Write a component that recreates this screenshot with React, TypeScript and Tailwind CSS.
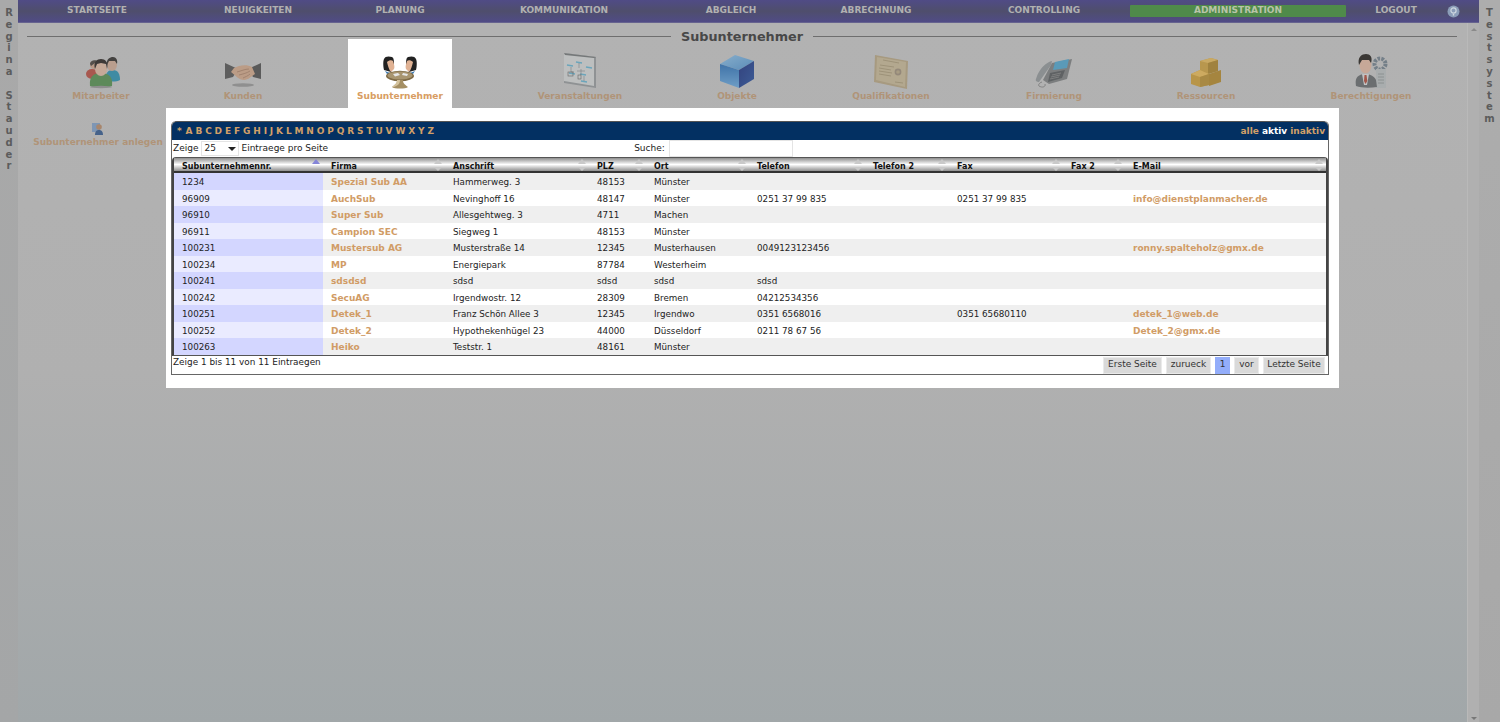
import React from "react";

const navItems: [string, string][] = [
  ["STARTSEITE", "w-[158px]"],
  ["NEUIGKEITEN", "w-[164px]"],
  ["PLANUNG", "w-[120px]"],
  ["KOMMUNIKATION", "w-[208px]"],
  ["ABGLEICH", "w-[126px]"],
  ["ABRECHNUNG", "w-[164px]"],
  ["CONTROLLING", "w-[172px]"],
];

const rows = [
  ["1234", "Spezial Sub AA", "Hammerweg. 3", "48153", "Münster", "", "", "", "", ""],
  ["96909", "AuchSub", "Nevinghoff 16", "48147", "Münster", "0251 37 99 835", "", "0251 37 99 835", "", "info@dienstplanmacher.de"],
  ["96910", "Super Sub", "Allesgehtweg. 3", "4711", "Machen", "", "", "", "", ""],
  ["96911", "Campion SEC", "Siegweg 1", "48153", "Münster", "", "", "", "", ""],
  ["100231", "Mustersub AG", "Musterstraße 14", "12345", "Musterhausen", "0049123123456", "", "", "", "ronny.spalteholz@gmx.de"],
  ["100234", "MP", "Energiepark", "87784", "Westerheim", "", "", "", "", ""],
  ["100241", "sdsdsd", "sdsd", "sdsd", "sdsd", "sdsd", "", "", "", ""],
  ["100242", "SecuAG", "Irgendwostr. 12", "28309", "Bremen", "04212534356", "", "", "", ""],
  ["100251", "Detek_1", "Franz Schön Allee 3", "12345", "Irgendwo", "0351 6568016", "", "0351 65680110", "", "detek_1@web.de"],
  ["100252", "Detek_2", "Hypothekenhügel 23", "44000", "Düsseldorf", "0211 78 67 56", "", "", "", "Detek_2@gmx.de"],
  ["100263", "Heiko", "Teststr. 1", "48161", "Münster", "", "", "", "", ""],
];

const heads = ["Subunternehmennr.", "Firma", "Anschrift", "PLZ", "Ort", "Telefon", "Telefon 2", "Fax", "Fax 2", "E-Mail"];
const letters = "ABCDEFGHIJKLMNOPQRSTUVWXYZ".split("");
const gridCols = "grid grid-cols-[149px_122px_144px_57px_103px_116px_84px_114px_62px_1fr]";

function People() {
  return (
    <svg width="40" height="40" viewBox="0 0 40 40">
      <ellipse cx="11" cy="24" rx="6" ry="5" fill="#a8584f" />
      <circle cx="13" cy="15" r="4" fill="#b89a88" />
      <path d="M9 14c0-4 7-5 8-2l-3 1-4 3z" fill="#55504c" />
      <path d="M25 30c-1-7 2-10 7-10s7 4 7 10c-4 2-10 2-14 0z" fill="#3f8ba3" />
      <ellipse cx="31" cy="15" rx="5" ry="6" fill="#b99e8e" />
      <path d="M26 15c-1-6 3-8 6-8s5 3 4 7l-2-3-6 0z" fill="#444240" />
      <path d="M9 36c-1-9 3-13 11-13s12 4 11 13c-6 2-16 2-22 0z" fill="#5d8a5a" />
      <ellipse cx="20" cy="19" rx="6" ry="7" fill="#c5a998" />
      <path d="M14 19c-2-7 2-10 6-10s8 3 6 10l-1-5-5-1-4 1z" fill="#3e3a38" />
      <ellipse cx="20" cy="37" rx="11" ry="1.2" fill="#8e8e8e" />
    </svg>
  );
}
function Handshake() {
  return (
    <svg width="40" height="40" viewBox="0 0 40 40">
      <ellipse cx="20" cy="35" rx="11" ry="1.8" fill="#8f8f8f" />
      <path d="M2 13l13 6-5 8-8 2z" fill="#5e5e5e" />
      <path d="M38 13l-13 6 5 8 8 2z" fill="#5a5a5a" />
      <path d="M11 18c5-3 13-4 18-1l3 7c-3 2-7 6-11 6-5 0-9-5-13-8z" fill="#bb9c86" />
      <path d="M14 22c4-1 8-3 12-3M16 25c4-1 8-2 11-4M20 28c2-1 5-2 7-4" stroke="#9a7c6a" strokeWidth="0.8" fill="none" />
    </svg>
  );
}
function Table() {
  return (
    <svg width="40" height="40" viewBox="0 0 40 40">
      <path d="M4 20c-1-4-1-9 0-11 1-3 5-3 8-2 2 1 2 4 2 8l-3 7z" fill="#222" />
      <path d="M7 12c2-2 5-2 6-1 1 3 2 6 1 8l-3 3c-2-2-3-6-4-10z" fill="#e0b294" />
      <path d="M36 20c1-4 1-9 0-11-1-3-5-3-8-2-2 1-2 4-2 8l3 7z" fill="#222" />
      <path d="M33 12c-2-2-5-2-6-1-1 3-2 6-1 8l3 3c2-2 3-6 4-10z" fill="#e0b294" />
      <path d="M5 21l5 2-3 1zM35 21l-5 2 3 1z" fill="#3a78b0" />
      <ellipse cx="20" cy="26" rx="14" ry="5.2" fill="#7e6a46" />
      <ellipse cx="20" cy="25.5" rx="12.5" ry="4" fill="#a89570" />
      <path d="M13 24l5-1 2 2-5 1.5zM23 23l5 1-1 2-5-1z" fill="#e6e6e6" />
      <path d="M17 30h6c0 3 1 4 5 7-2 2-14 2-16 0 4-3 5-4 5-7z" fill="#a58f63" />
      <path d="M17 30h3c0 3-1 5-6 7-1 0-2 0-2 0 4-3 5-4 5-7z" fill="#d4c29c" />
    </svg>
  );
}
function Flow() {
  return (
    <svg width="40" height="40" viewBox="0 0 40 40">
      <path d="M4 3l32 4 0 31-32-5z" fill="#8f9294" />
      <path d="M4 3l30 4 0 29-30-5z" fill="#bdbfbf" />
      <path d="M4 3l32 4-2 1-29-3z" fill="#757879" />
      <path d="M7 15l6 1M16 12l6 1M26 17l6 1M9 23l6 1M20 24l6 1M21 31l6 1" stroke="#6aa5bb" strokeWidth="1.4" />
      <path d="M19 13v5M11 17v5h3M21 19v6M17 21h8M24 26v5" stroke="#7d8285" strokeWidth="0.6" fill="none" />
      <rect x="8" y="22" width="5" height="4" fill="none" stroke="#666" strokeWidth="0.6" />
      <rect x="18" y="25" width="3" height="4" fill="none" stroke="#666" strokeWidth="0.6" />
    </svg>
  );
}
function Cube() {
  return (
    <svg width="40" height="40" viewBox="0 0 40 40">
      <defs>
        <linearGradient id="cubeL" x1="0" y1="0" x2="0" y2="1"><stop offset="0" stopColor="#3f73a8" /><stop offset="1" stopColor="#6f9ec6" /></linearGradient>
        <linearGradient id="cubeT" x1="0" y1="0" x2="1" y2="1"><stop offset="0" stopColor="#87aecb" /><stop offset="1" stopColor="#5b8cb8" /></linearGradient>
        <linearGradient id="cubeR" x1="0" y1="0" x2="1" y2="1"><stop offset="0" stopColor="#33437e" /><stop offset="1" stopColor="#3d5c96" /></linearGradient>
      </defs>
      <path d="M3 14l15-9 19 6-15 9z" fill="url(#cubeT)" />
      <path d="M3 14l19 6v18L3 31z" fill="url(#cubeL)" />
      <path d="M22 20l15-9v18L22 38z" fill="url(#cubeR)" />
    </svg>
  );
}
function Certificate() {
  return (
    <svg width="40" height="40" viewBox="0 0 40 40">
      <path d="M4 5l33 6-1 28L3 32z" fill="#a79a80" />
      <path d="M6 7l29 5-1 25L5 30z" fill="#b3a88f" />
      <path d="M12 10l16 3M9 15l14 2M8 18l12 2M8 21l13 2M8 24l12 2M24 32l8 1" stroke="#94886f" strokeWidth="0.7" />
      <circle cx="27" cy="22" r="3.4" fill="#94897a" />
      <circle cx="27" cy="22" r="1.8" fill="#a89c83" />
    </svg>
  );
}
function Phone() {
  return (
    <svg width="40" height="40" viewBox="0 0 40 40">
      <path d="M18 11c-5 1-13 7-16 18-1 2 1 3 3 3l12-17z" fill="#8b8f91" />
      <path d="M8 32c-3 1-4 3-3 4 3 2 7 1 6-2" stroke="#777" strokeWidth="0.8" fill="none" />
      <path d="M9 30l9-17 20-4-5 20-18 5z" fill="#7c7e7f" />
      <path d="M21 12l14-3-2 9-14 2z" fill="#5a9ab8" />
      <path d="M16 23l15-3-3 8-14 4z" fill="#5f6264" />
      <path d="M18 25l9-2M17 27l9-2M16 29l9-2" stroke="#8b8b8b" strokeWidth="0.7" />
    </svg>
  );
}
function Boxes() {
  return (
    <svg width="40" height="40" viewBox="0 0 40 40">
      <path d="M14 11l11-3 7 2v11l-10 3-8-3z" fill="#b8974e" />
      <path d="M14 11l11-3 7 2-10 3z" fill="#c9a963" />
      <path d="M22 13l10-3v11l-10 3z" fill="#a0823f" />
      <path d="M5 24l9-4 9 4v11l-9 2-9-3z" fill="#b89549" />
      <path d="M5 24l9-4 9 4-9 3z" fill="#cdaa60" />
      <path d="M14 27l9-3v11l-9 2z" fill="#a88944" />
      <path d="M23 24l12-4v12l-12 4z" fill="#a5853f" />
    </svg>
  );
}
function Admin() {
  return (
    <svg width="40" height="40" viewBox="0 0 40 40">
      <circle cx="29" cy="14" r="5.5" fill="none" stroke="#747f88" strokeWidth="4" strokeDasharray="2.6 1.2" />
      <rect x="25" y="19" width="10" height="19" fill="#a9adae" />
      <path d="M27 24h6M27 27h6M27 30h6M27 33h6" stroke="#858a8c" strokeWidth="0.8" />
      <path d="M5 36c-1-7 0-10 7-12h5c3 1 7 3 8 6l1 7c-7 1-16 1-21-1z" fill="#6b6e70" />
      <path d="M11 24h7l-2 11-3 0z" fill="#c2c2c2" />
      <path d="M13.5 25h2l.8 6-1.800 3-1.500-3z" fill="#a3574a" />
      <ellipse cx="14.500" cy="15" rx="6" ry="8.500" fill="#c7a898" />
      <path d="M8 15c-2-8 3-11 7-11 4 0 7 3 5 9l-2-3-7 0z" fill="#3b3835" />
    </svg>
  );
}

const tabs: [string, React.ReactNode, string][] = [
  ["Mitarbeiter", <People />, "w-[166px]"],
  ["Kunden", <Handshake />, "w-[118px] mr-[46px]"],
  ["Subunternehmer", <Table />, "w-[104px] bg-white text-[#d89d62]"],
  ["Veranstaltungen", <Flow />, "w-[256px]"],
  ["Objekte", <Cube />, "w-[58px]"],
  ["Qualifikationen", <Certificate />, "w-[250px]"],
  ["Firmierung", <Phone />, "w-[76px]"],
  ["Ressourcen", <Boxes />, "w-[228px]"],
  ["Berechtigungen", <Admin />, "w-[102px]"],
];

function SortArrows({ active }: { active?: boolean }) {
  return (
    <span className="absolute right-[3px] top-[1px] flex flex-col items-center gap-[3px]">
      <span className={`w-0 h-0 border-x-[4px] border-x-transparent border-b-[5px] ${active ? "border-b-[#8585d8]" : "border-b-[#c9c9c9]"}`} />
      {active ? null : <span className="w-0 h-0 border-x-[4px] border-x-transparent border-t-[4px] border-t-[#c9c9c9]" />}
    </span>
  );
}

function PagerButton({ label, cls }: { label: string; cls: string }) {
  return (
    <span className={`h-[17px] flex items-center justify-center border border-[#eaeaea] bg-[#d9d9d9] text-[#333] ${cls}`}>{label}</span>
  );
}

function VerticalName({ text, cls }: { text: string; cls: string }) {
  return (
    <div className={`flex flex-col items-center pt-[7px] text-[10px] font-bold leading-[11.8px] text-[#5c5c5c] ${cls}`}>
      {text.split("").map((c, i) => (
        <span key={i} className="h-[11.8px]">{c === " " ? "\u00a0" : c}</span>
      ))}
    </div>
  );
}

export default function App() {
  return (
    <div className="relative flex h-[722px] w-[1500px] overflow-hidden bg-[#b0b0b0] font-['DejaVu_Sans',sans-serif] text-[9px]">
      <VerticalName text="Regina Stauder" cls="w-[18px] shrink-0 bg-[#a6a6a6] bg-gradient-to-b from-[#a9a9a9] to-[#a4a6a7]" />

      <div className="flex w-[1461px] shrink-0 flex-col">
        <nav className="flex h-[23px] shrink-0 items-center border-b border-[#66638f] bg-gradient-to-b from-[#504b86] via-[#4f4e6c] to-[#504b86] font-bold text-[#b1b1b1]">
          {navItems.map(([label, w]) => (
            <span key={label} className={`${w} text-center`}>{label}</span>
          ))}
          <span className="flex h-[12px] w-[216px] items-center justify-center rounded-[1px] bg-[#4f8a4a] text-[#b9c4a8]">ADMINISTRATION</span>
          <span className="w-[100px] text-center">LOGOUT</span>
          <svg className="ml-[1px]" width="13" height="13" viewBox="0 0 13 13">
            <circle cx="6.500" cy="6.500" r="6" fill="#8b9db8" />
            <circle cx="6.500" cy="5.500" r="2.600" fill="none" stroke="#cfd8e0" strokeWidth="1.200" />
            <rect x="5.800" y="9" width="1.400" height="1.600" fill="#cfd8e0" />
          </svg>
        </nav>

        <div className="flex flex-1 bg-gradient-to-b from-[#b2b2b2] via-[#b0b0b0] to-[#a1a7a9]">
          <div className="flex w-[1449px] shrink-0 flex-col">
            <div className="ml-[9px] mt-[6px] flex w-[1430px] items-center gap-[10px]">
              <span className="h-px flex-1 bg-[#6e6e6e]" />
              <span className="text-[12.800px] font-bold leading-[15px] text-[#484848]">Subunternehmer</span>
              <span className="h-px w-[644px] bg-[#6e6e6e]" />
            </div>
            <div className="flex h-[69px] items-start font-bold text-[#b09478] -mt-[5px]">
              {tabs.map(([label, icon, cls]) => (
                <div key={label} className={`flex h-full shrink-0 flex-col items-center pt-[11px] ${cls}`}>
                  {icon}
                  <span className="mt-[1px] leading-[11px]">{label}</span>
                </div>
              ))}
            </div>
            <div className="ml-[15px] mt-[14px] flex w-[130px] flex-col items-center font-bold text-[#b09478]">
              <svg width="14" height="13" viewBox="0 0 14 13">
                <rect x="1" y="1" width="8" height="9" fill="#7e96b4" />
                <circle cx="8" cy="5" r="2.800" fill="#a8866c" />
                <path d="M4 13c0-4 2-5 4-5s4 1 4 5z" fill="#45628a" />
              </svg>
              <span className="mt-[1px] leading-[12px] whitespace-nowrap">Subunternehmer anlegen</span>
            </div>
          </div>
          <div className="flex w-[12px] shrink-0 flex-col items-center justify-between border-l border-[#b9b9b9] bg-[#b0b0b0] pb-[2px] pt-[5px]">
            <span className="h-0 w-0 border-x-[3px] border-b-[3px] border-x-transparent border-b-[#8a8a8a]" />
            <span className="h-0 w-0 border-x-[3px] border-t-[3px] border-x-transparent border-t-[#777]" />
          </div>
        </div>
      </div>

      <VerticalName text="Testsystem" cls="w-[21px] shrink-0 bg-gradient-to-b from-[#adadad] to-[#a8a8a8]" />

      {/* modal panel */}
      <div className="absolute left-[166px] top-[108px] h-[280px] w-[1173px] bg-white pl-[5px] pt-[13px]">
        <div className="h-[254px] w-[1158px] rounded-t-[5px] border-x border-b border-[#666]">
          <div className="flex h-[19px] items-center justify-between rounded-t-[5px] border-t border-[#555] bg-[#033062] pl-[5px] pr-[3px] pt-[2px] font-bold text-[#d2a068]">
            <span className="flex gap-[2.860px]">
              <span className="mr-[1px]">*</span>
              {letters.map((l) => (<span key={l}>{l}</span>))}
            </span>
            <span className="flex gap-[3px] text-[9px]">
              <span>alle</span>
              <span className="text-white">aktiv</span>
              <span>inaktiv</span>
            </span>
          </div>

          <div className="flex h-[17px] items-center pl-[1px] text-[#222]">
            <span>Zeige</span>
            <span className="relative ml-[3px] flex h-[15px] w-[38px] items-center border border-[#e4e4e4] pl-[2px]">
              25
              <span className="absolute right-[2px] top-[5px] h-0 w-0 border-x-[4px] border-t-[4px] border-x-transparent border-t-[#222]" />
            </span>
            <span className="ml-[2px]">Eintraege pro Seite</span>
            <span className="ml-[306px]">Suche:</span>
            <span className="ml-[4px] h-[17px] w-[124px] border border-[#e4e4e4] bg-white" />
          </div>

          <div className="w-[1156px] rounded-t-[4px] border-x-2 border-b border-t border-x-[#444] border-b-[#555] border-t-[#555]">
            <div className={`${gridCols} h-[15px] border-b-2 border-b-[#333] bg-gradient-to-b from-[#8f8f8f] via-white to-[#8f8f8f] text-[8px] font-bold leading-[17px] text-[#111]`}>
              {heads.map((h, i) => (
                <span key={h} className="relative whitespace-nowrap pl-[8px]">
                  {h}
                  <SortArrows active={i === 0} />
                </span>
              ))}
            </div>
            {rows.map((r, i) => (
              <div key={r[0]} className={`${gridCols} h-[16.500px] text-[8.750px] leading-[19px] text-[#222] ${i % 2 === 0 ? "bg-[#efefef]" : "bg-white"}`}>
                {r.map((c, j) => (
                  <span
                    key={j}
                    className={`h-[16.500px] whitespace-nowrap pl-[8px] ${j === 0 ? (i % 2 === 0 ? "bg-[#d3d6ff]" : "bg-[#eaebff]") : ""} ${j === 1 || j === 9 ? "text-[9px] font-bold text-[#d19c66]" : ""}`}
                  >
                    {c}
                  </span>
                ))}
              </div>
            ))}
          </div>

          <div className="flex h-[19px] items-start justify-between pl-[1px] pr-[3px] text-[#222]">
            <span className="text-[8.900px] leading-[13px]">Zeige 1 bis 11 von 11 Eintraegen</span>
            <div className="flex gap-[4px] pt-[1px]">
              <PagerButton label="Erste Seite" cls="w-[59px]" />
              <PagerButton label="zurueck" cls="w-[45px]" />
              <span className="flex h-[17px] w-[15px] items-center justify-center bg-[#93adfa] text-[#333]">1</span>
              <PagerButton label="vor" cls="w-[25px]" />
              <PagerButton label="Letzte Seite" cls="w-[62px]" />
            </div>
          </div>
        </div>
      </div>
    </div>
  );
}
